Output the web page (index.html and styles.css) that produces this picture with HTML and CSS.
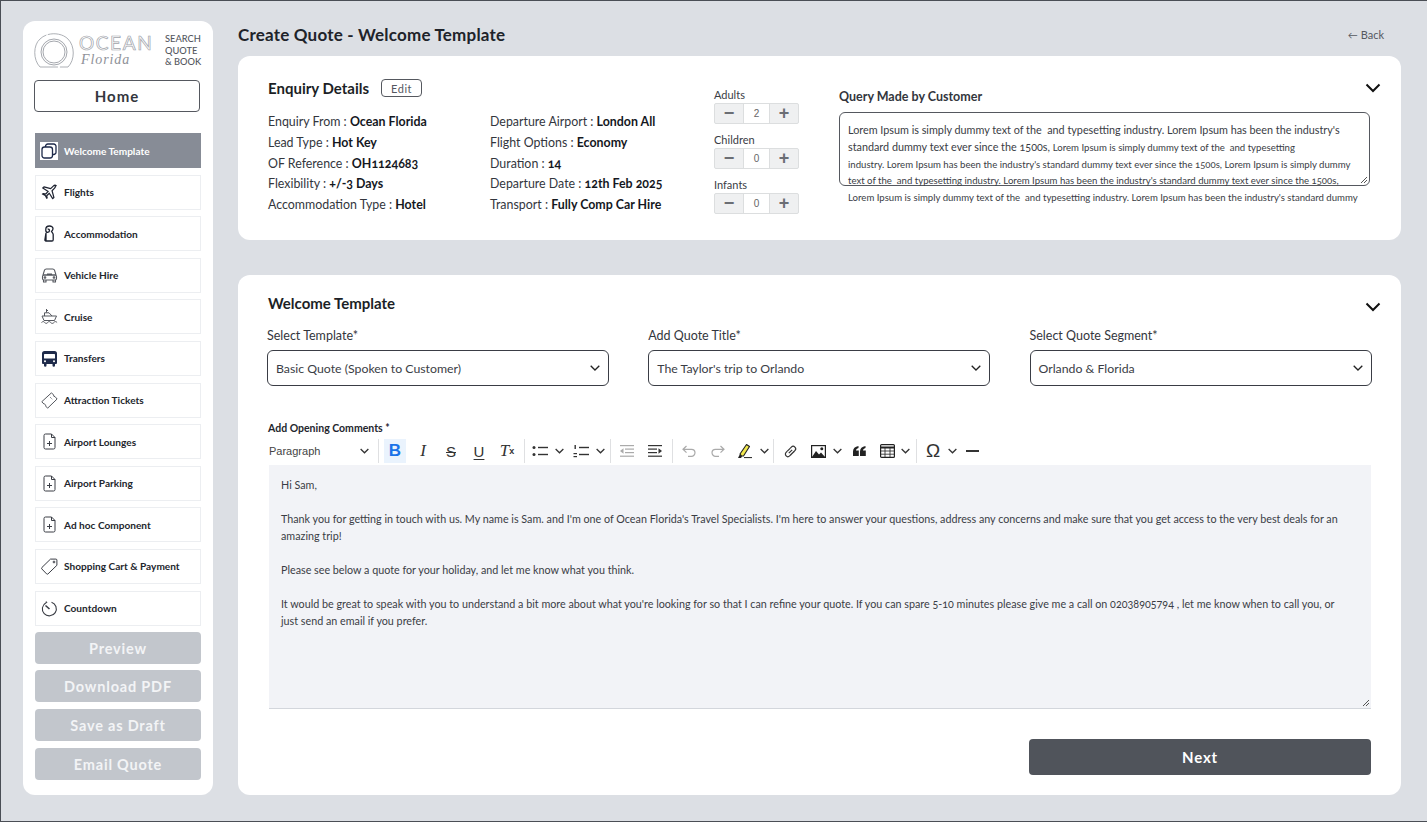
FILE: index.html
```html
<!DOCTYPE html>
<html lang="en">
<head>
<meta charset="utf-8">
<title>Create Quote - Welcome Template</title>
<link rel="stylesheet" href="styles.css">
</head>
<body>
<div class="page">
  <aside class="sidebar">
    <div class="brand">
      <svg class="brand-mark" width="40" height="36" viewBox="0 0 40 36" fill="none" stroke="#a4a7ad">
        <path d="M6 35C-1 28-1 13 6 7 13 0 27 0 34 7 41 14 41 28 34 35Z" stroke-width="0.9" stroke-dasharray="38 1.5 60 2"/>
        <circle cx="20" cy="20" r="13" stroke-width="1"/>
        <circle cx="20" cy="20" r="11" stroke-width="1"/>
      </svg>
      <div class="brand-name">
        <span class="brand-ocean">OCEAN</span>
        <span class="brand-florida">Florida</span>
      </div>
      <div class="brand-tag">SEARCH<br>QUOTE<br>&amp; BOOK</div>
    </div>
    <a class="home-btn">Home</a>
    <nav class="menu">
      <a class="menu-item active">
        <span class="menu-ico"><svg width="16" height="16" viewBox="0 0 16 16" fill="none" stroke="#1e2a4a" stroke-width="1.3"><rect x="1" y="4" width="10.5" height="11" rx="2.5"/><path d="M4.5 4V3.3A2.3 2.3 0 0 1 6.8 1H12.7A2.3 2.3 0 0 1 15 3.3V9.2A2.3 2.3 0 0 1 12.7 11.5H11.5" /></svg></span>
        Welcome Template</a>
      <a class="menu-item">
        <span class="menu-ico"><svg width="17" height="17" viewBox="0 0 24 24" fill="none" stroke="#1d2230" stroke-width="1.7" stroke-linejoin="round"><path d="M21.5 2.5c-1-1-3-.7-4.2.5l-3.6 3.6L4.2 4 2.5 5.7l7.7 4.8-3.6 3.6-3-.6L2 14.1l4 2 .1.1 2 4 .6-.6-.6-3 3.600-3.600 4.800 7.700 1.700-1.700-2.600-9.500 3.600-3.600c1.200-1.200 1.500-3.200.4-3.500z"/></svg></span>
        Flights</a>
      <a class="menu-item">
        <span class="menu-ico"><svg width="17" height="17" viewBox="0 0 17 17" fill="none" stroke="#1d2230" stroke-width="1.3"><path d="M5 16h6a1.200 1.200 0 0 0 1.200-1.200V9.500C12 8 11 7.500 10.500 6.500 11.500 5.500 12 4.800 12 3.700 12 2 10.500 1 8.500 1 6.300 1 4.800 2.300 4.800 4.300V5.500c0 1 .9 1.800 1.900 1.800S8.500 6.500 8.500 5.500 7.600 3.900 6.600 4.200M5 7.800 3.900 14.800A1 1 0 0 0 5 16Z"/></svg></span>
        Accommodation</a>
      <a class="menu-item">
        <span class="menu-ico"><svg width="17" height="17" viewBox="0 0 17 17" fill="none" stroke="#55585f" stroke-width="1.100" stroke-linejoin="round"><path d="M2 8 3.500 3.200C3.800 2.300 4.400 2 5.300 2H11.700C12.600 2 13.200 2.300 13.500 3.200L15 8"/><rect x="1.500" y="8" width="14" height="5" rx="1.500"/><path d="M2.500 13v2h2.500v-2M12 13v2h2.500v-2M6 7h5M2 8h13"/><circle cx="4" cy="10.500" r=".8"/><circle cx="13" cy="10.500" r=".8"/></svg></span>
        Vehicle Hire</a>
      <a class="menu-item">
        <span class="menu-ico"><svg width="17" height="17" viewBox="0 0 17 17" fill="none" stroke="#55585f" stroke-width="1"><path d="M5.500 1v3.500M5.500 2.500h1.500M3.500 8V4.800H8L11 8M1 8h14.500L13.500 12.500H3Z"/><path d="M.5 14.500c1.300-1.200 2.500-1.200 3.200 0 .8 1.200 2 1.200 3 0 1-1.200 2-1.200 3 0 1 1.200 2.300 1.200 3.200 0 .9-1.200 2-1.200 3.200 0"/></svg></span>
        Cruise</a>
      <a class="menu-item">
        <span class="menu-ico"><svg width="17" height="17" viewBox="0 0 17 17" fill="#1e2a4a"><path d="M3.500 1h10A2.500 2.500 0 0 1 16 3.500V13a1 1 0 0 1-1 1H14v1.500a1 1 0 0 1-2.500 0V14h-6v1.500a1 1 0 0 1-2.500 0V14H2a1 1 0 0 1-1-1V3.500A2.500 2.500 0 0 1 3.500 1Z"/><rect x="3" y="4" width="11" height="4.500" rx=".5" fill="#fff"/><circle cx="4" cy="11.300" r="1" fill="#fff"/><circle cx="13" cy="11.300" r="1" fill="#fff"/></svg></span>
        Transfers</a>
      <a class="menu-item">
        <span class="menu-ico"><svg width="17" height="17" viewBox="0 0 17 17" fill="none" stroke="#55585f" stroke-width="1" stroke-linejoin="round"><path d="M.8 9.700 10.500.8 12.600 3a1.500 1.500 0 0 0 1.500 1.700l2 2.300-9.500 9.200-2-2.200A1.600 1.600 0 0 0 2.900 12Z"/><path d="m9 5 .7.700M10.500 6.500l.7.700" /></svg></span>
        Attraction Tickets</a>
      <a class="menu-item">
        <span class="menu-ico"><svg class="doc" width="17" height="17" viewBox="0 0 17 17" fill="none" stroke="#3a3d45" stroke-width="1"><path d="M4.500 1h6l3.500 3.500V14.500a1.500 1.500 0 0 1-1.500 1.500h-8A1.500 1.500 0 0 1 3 14.500v-12A1.500 1.500 0 0 1 4.500 1ZM10.500 1v3.500H14M8.500 8v5M6 10.500h5"/></svg></span>
        Airport Lounges</a>
      <a class="menu-item">
        <span class="menu-ico"><svg class="doc" width="17" height="17" viewBox="0 0 17 17" fill="none" stroke="#3a3d45" stroke-width="1"><path d="M4.500 1h6l3.500 3.500V14.500a1.500 1.500 0 0 1-1.500 1.500h-8A1.500 1.500 0 0 1 3 14.500v-12A1.500 1.500 0 0 1 4.500 1ZM10.500 1v3.500H14M8.500 8v5M6 10.500h5"/></svg></span>
        Airport Parking</a>
      <a class="menu-item">
        <span class="menu-ico"><svg class="doc" width="17" height="17" viewBox="0 0 17 17" fill="none" stroke="#3a3d45" stroke-width="1"><path d="M4.500 1h6l3.500 3.500V14.500a1.500 1.500 0 0 1-1.500 1.500h-8A1.500 1.500 0 0 1 3 14.500v-12A1.500 1.500 0 0 1 4.500 1ZM10.500 1v3.500H14M8.500 8v5M6 10.500h5"/></svg></span>
        Ad hoc Component</a>
      <a class="menu-item">
        <span class="menu-ico"><svg width="17" height="17" viewBox="0 0 17 17" fill="none" stroke="#3a3d45" stroke-width="1" stroke-linejoin="round"><path d="M.9 9.500 9.500 1.100h5.400a1 1 0 0 1 1 1v5.200L7 15.900a1 1 0 0 1-1.400 0L.9 11a1 1 0 0 1 0-1.500Z"/><circle cx="13" cy="4" r=".9"/></svg></span>
        Shopping Cart &amp; Payment</a>
      <a class="menu-item">
        <span class="menu-ico"><svg width="17" height="17" viewBox="0 0 17 17" fill="none" stroke="#3a3d45" stroke-width="1.100"><path d="M10.500 2.200A7 7 0 1 1 5 2.700M5 1.500 6 3"/><path d="M4.500 5.500 8.500 9" stroke-width="1.600"/></svg></span>
        Countdown</a>
    </nav>
    <div class="actions">
      <a class="act-btn">Preview</a>
      <a class="act-btn">Download PDF</a>
      <a class="act-btn">Save as Draft</a>
      <a class="act-btn">Email Quote</a>
    </div>
  </aside>

  <main class="main">
    <header class="topbar">
      <h1 class="page-title">Create Quote - Welcome Template</h1>
      <a class="back"><span class="back-arrow">←</span> Back</a>
    </header>

    <section class="card card-enquiry">
      <svg class="card-chevron" width="16" height="10" viewBox="0 0 16 10" fill="none" stroke="#111" stroke-width="2"><path d="M1.500 1.500 8 8l6.500-6.500"/></svg>
      <div class="enquiry">
        <div class="enquiry-head">
          <h2 class="card-title">Enquiry Details</h2>
          <a class="edit-btn">Edit</a>
        </div>
        <div class="enquiry-grid">
          <div class="fact">Enquiry From : <b>Ocean Florida</b></div>
          <div class="fact">Departure Airport : <b>London All</b></div>
          <div class="fact">Lead Type : <b>Hot Key</b></div>
          <div class="fact">Flight Options : <b>Economy</b></div>
          <div class="fact">OF Reference : <b>OH1124683</b></div>
          <div class="fact">Duration : <b>14</b></div>
          <div class="fact">Flexibility : <b>+/-3 Days</b></div>
          <div class="fact">Departure Date : <b>12th Feb 2025</b></div>
          <div class="fact">Accommodation Type : <b>Hotel</b></div>
          <div class="fact">Transport : <b>Fully Comp Car Hire</b></div>
        </div>
      </div>
      <div class="counters">
        <div class="counter">
          <div class="counter-label">Adults</div>
          <div class="stepper"><span class="step">−</span><span class="step-val">2</span><span class="step">+</span></div>
        </div>
        <div class="counter">
          <div class="counter-label">Children</div>
          <div class="stepper"><span class="step">−</span><span class="step-val">0</span><span class="step">+</span></div>
        </div>
        <div class="counter">
          <div class="counter-label">Infants</div>
          <div class="stepper"><span class="step">−</span><span class="step-val">0</span><span class="step">+</span></div>
        </div>
      </div>
      <div class="query">
        <h3 class="query-title">Query Made by Customer</h3>
        <div class="query-box">
          <div class="q-line q-lg">Lorem Ipsum is simply dummy text of the&nbsp; and typesetting industry. Lorem Ipsum has been the industry's</div>
          <div class="q-line q-lg">standard dummy text ever since the 1500s, <span class="q-sm">Lorem Ipsum is simply dummy text of the&nbsp; and typesetting</span></div>
          <div class="q-line q-sm">industry. Lorem Ipsum has been the industry's standard dummy text ever since the 1500s, Lorem Ipsum is simply dummy</div>
          <div class="q-line q-sm">text of the&nbsp; and typesetting industry. Lorem Ipsum has been the industry's standard dummy text ever since the 1500s,</div>
          <div class="q-line q-sm">Lorem Ipsum is simply dummy text of the&nbsp; and typesetting industry. Lorem Ipsum has been the industry's standard dummy</div>
          <svg class="resize-grip" width="8" height="8" viewBox="0 0 8 8" stroke="#555"><path d="M1 7 7 1M4 7 7 4"/></svg>
        </div>
      </div>
    </section>

    <section class="card card-welcome">
      <svg class="card-chevron" width="16" height="10" viewBox="0 0 16 10" fill="none" stroke="#111" stroke-width="2"><path d="M1.500 1.500 8 8l6.500-6.500"/></svg>
      <h2 class="card-title card-title-inset">Welcome Template</h2>
      <div class="fields">
        <div class="field">
          <label class="field-label">Select Template*</label>
          <div class="select">Basic Quote (Spoken to Customer)<svg width="10" height="6" viewBox="0 0 10 6" fill="none" stroke="#222" stroke-width="1.300"><path d="M.7.700 5 5 9.300.7"/></svg></div>
        </div>
        <div class="field">
          <label class="field-label">Add Quote Title*</label>
          <div class="select">The Taylor's trip to Orlando<svg width="10" height="6" viewBox="0 0 10 6" fill="none" stroke="#222" stroke-width="1.300"><path d="M.7.700 5 5 9.300.7"/></svg></div>
        </div>
        <div class="field">
          <label class="field-label">Select Quote Segment*</label>
          <div class="select">Orlando &amp; Florida<svg width="10" height="6" viewBox="0 0 10 6" fill="none" stroke="#222" stroke-width="1.300"><path d="M.7.700 5 5 9.300.7"/></svg></div>
        </div>
      </div>

      <div class="comments">
        <div class="comments-label">Add Opening Comments *</div>
        <div class="toolbar">
          <div class="tb-para">Paragraph<svg width="9" height="6" viewBox="0 0 10 6" fill="none" stroke="#333" stroke-width="1.400"><path d="M.7.700 5 5 9.300.7"/></svg></div>
          <span class="tb-sep"></span>
          <span class="tb-btn tb-on tb-b">B</span>
          <span class="tb-btn tb-i">I</span>
          <span class="tb-btn tb-s">S</span>
          <span class="tb-btn tb-u">U</span>
          <span class="tb-btn tb-i">T<sub class="tb-x">x</sub></span>
          <span class="tb-sep"></span>
          <span class="tb-btn tb-narrow"><svg width="17" height="12" viewBox="0 0 17 12" fill="#333"><circle cx="2" cy="2.500" r="1.500"/><circle cx="2" cy="9.500" r="1.500"/><rect x="6" y="1.800" width="10" height="1.400"/><rect x="6" y="8.800" width="10" height="1.400"/></svg></span>
          <span class="tb-chev"><svg width="9" height="6" viewBox="0 0 10 6" fill="none" stroke="#333" stroke-width="1.400"><path d="M.7.700 5 5 9.300.7"/></svg></span>
          <span class="tb-btn tb-narrow tb-ol"><svg width="17" height="14" viewBox="0 0 17 14" fill="#333"><rect x="6" y="2.800" width="10" height="1.400"/><rect x="6" y="9.800" width="10" height="1.400"/><rect x="1.500" y="1" width="1.400" height="4"/><rect x=".5" y="9" width="3.500" height="1.200"/><rect x=".5" y="12" width="3.500" height="1.200"/></svg></span>
          <span class="tb-chev"><svg width="9" height="6" viewBox="0 0 10 6" fill="none" stroke="#333" stroke-width="1.400"><path d="M.7.700 5 5 9.300.7"/></svg></span>
          <span class="tb-sep tb-sep-wide"></span>
          <span class="tb-btn"><svg width="16" height="12" viewBox="0 0 16 12" fill="#aaa"><rect x="1" y="0" width="14" height="1.200"/><rect x="6" y="3.500" width="9" height="1.200"/><rect x="6" y="7" width="9" height="1.200"/><rect x="1" y="10.600" width="14" height="1.200"/><path d="M4.500 3.200v5.600L1 6z"/></svg></span>
          <span class="tb-btn"><svg width="16" height="12" viewBox="0 0 16 12" fill="#333"><rect x="1" y="0" width="14" height="1.200"/><rect x="1" y="3.500" width="9" height="1.200"/><rect x="1" y="7" width="9" height="1.200"/><rect x="1" y="10.600" width="14" height="1.200"/><path d="M11.500 3.200v5.600L15 6z"/></svg></span>
          <span class="tb-sep"></span>
          <span class="tb-btn"><svg width="15" height="12" viewBox="0 0 15 12" fill="none" stroke="#aaa" stroke-width="1.200"><path d="M4.500 1 1 4.300l3.500 3.300M1 4.300h8.500a3.500 3.500 0 0 1 0 7H6"/></svg></span>
          <span class="tb-btn"><svg width="15" height="12" viewBox="0 0 15 12" fill="none" stroke="#aaa" stroke-width="1.200"><path d="M10.500 1 14 4.300l-3.500 3.300M14 4.300H5.500a3.500 3.500 0 0 0 0 7H9"/></svg></span>
          <span class="tb-btn"><svg width="16" height="16" viewBox="0 0 16 16"><path d="M3 11 9.500 1.500l3 2L6.500 13H4.500Z" fill="#f2e84d" stroke="#222" stroke-width="1.100" stroke-linejoin="round"/><path d="M3 11 1 15h3l1-1.500Z" fill="#222"/><rect x="7" y="14" width="8" height="1.100" fill="#333"/></svg></span>
          <span class="tb-chev"><svg width="9" height="6" viewBox="0 0 10 6" fill="none" stroke="#333" stroke-width="1.400"><path d="M.7.700 5 5 9.300.7"/></svg></span>
          <span class="tb-sep"></span>
          <span class="tb-btn"><svg width="15" height="15" viewBox="0 0 15 15" fill="none" stroke="#333" stroke-width="1.200"><g transform="rotate(-45 7.500 7.500)"><path d="M5.500 5H3.800a2.500 2.500 0 0 0 0 5h1.700M9.500 5h1.700a2.500 2.500 0 0 1 0 5H9.500"/><path d="M5.500 5h4M5 10h5" /></g><path d="M5.800 9.200 9.200 5.800"/></svg></span>
          <span class="tb-btn"><svg width="15" height="13" viewBox="0 0 15 13"><rect x=".6" y=".6" width="13.800" height="11.800" fill="none" stroke="#222" stroke-width="1.200"/><path d="M1 12 5 6l3 3.500 2-2 4 4.500Z" fill="#222"/><circle cx="10.800" cy="3.800" r="1.500" fill="#222"/></svg></span>
          <span class="tb-chev"><svg width="9" height="6" viewBox="0 0 10 6" fill="none" stroke="#333" stroke-width="1.400"><path d="M.7.700 5 5 9.300.7"/></svg></span>
          <span class="tb-btn tb-quote-gap"><svg width="13" height="10" viewBox="0 0 13 10" fill="#222"><path d="M0 10V5.500C0 2.500 2 .5 5.500 0v2C4 2.500 3 3.400 3 4.500h2.800V10ZM7 10V5.500C7 2.500 9 .5 12.500 0v2C11 2.500 10 3.400 10 4.500h2.800V10Z"/></svg></span>
          <span class="tb-btn"><svg width="15" height="14" viewBox="0 0 15 14" fill="none" stroke="#222"><rect x=".6" y=".6" width="13.800" height="12.800" rx="1" stroke-width="1.200"/><path d="M.6 3.500h13.800" stroke-width="2"/><path d="M.6 7h13.800M.6 10.200h13.800M5 3v10.500M10 3v10.500" stroke-width=".8"/></svg></span>
          <span class="tb-chev tb-chev-tight"><svg width="9" height="6" viewBox="0 0 10 6" fill="none" stroke="#333" stroke-width="1.400"><path d="M.7.700 5 5 9.300.7"/></svg></span>
          <span class="tb-sep tb-sep-mid"></span>
          <span class="tb-btn tb-omega">Ω</span>
          <span class="tb-chev"><svg width="9" height="6" viewBox="0 0 10 6" fill="none" stroke="#333" stroke-width="1.400"><path d="M.7.700 5 5 9.300.7"/></svg></span>
          <span class="tb-btn"><span class="tb-hr"></span></span>
        </div>
        <div class="editor">
          <p class="ed-p">Hi Sam,</p>
          <p class="ed-p">Thank you for getting in touch with us. My name is Sam. and I'm one of Ocean Florida's Travel Specialists. I'm here to answer your questions, address any concerns and make sure that you get access to the very best deals for an amazing trip!</p>
          <p class="ed-p">Please see below a quote for your holiday, and let me know what you think.</p>
          <p class="ed-p">It would be great to speak with you to understand a bit more about what you're looking for so that I can refine your quote. If you can spare 5-10 minutes please give me a call on 02038905794 , let me know when to call you, or just send an email if you prefer.</p>
          <svg class="resize-grip" width="8" height="8" viewBox="0 0 8 8" stroke="#555"><path d="M1 7 7 1M4 7 7 4"/></svg>
        </div>
        <div class="next-row"><a class="next-btn">Next</a></div>
      </div>
    </section>
  </main>
</div>
</body>
</html>
```
FILE: styles.css
```css
* { box-sizing: border-box; }
html, body { margin: 0; height: 100%; }
body {
  font-family: "Lato", "Liberation Sans", sans-serif;
  font-variant-numeric: oldstyle-nums;
  color: #1c1f26;
  background: #dcdfe4;
}
.page {
  height: 822px;
  width: 1427px;
  overflow: hidden;
  display: flex;
  gap: 25px;
  padding: 20px 26px 26px 22px;
  border: solid #4a4e55;
  border-width: 1px 0 1px 1px;
  background: #dcdfe4;
}

/* Sidebar */
.sidebar {
  width: 190px;
  flex: none;
  height: 774px;
  background: #fff;
  border-radius: 12px;
  padding: 9px 12px 0;
}
.brand { display: flex; align-items: center; height: 50px; padding-bottom: 11px; margin-left: -1px; }
.brand-mark { flex: none; margin-top: 1px; }
.brand-name { display: flex; flex-direction: column; margin-left: 5px; width: 86px; flex: none; }
.brand-ocean {
  font-size: 19px; line-height: 19px; letter-spacing: 1.6px; font-weight: 400;
  color: #fff; -webkit-text-stroke: 0.7px #a0a3aa;
}
.brand-florida {
  font-family: "Liberation Serif", serif; font-style: italic;
  font-size: 14px; line-height: 15px; letter-spacing: .9px; color: #8f9299; margin-left: 2px;
}
.brand-tag { font-size: 9.3px; line-height: 11.7px; color: #55585f; font-weight: 500; margin-top: 2px; white-space: nowrap; }
.home-btn {
  display: flex; align-items: center; justify-content: center;
  height: 32px; width: 166px; margin-left: -1px;
  border: 1px solid #55585f; border-radius: 4px;
  font-size: 15px; font-weight: 700; letter-spacing: 1px; color: #33363d;
}
.menu { display: flex; flex-direction: column; gap: 6.6px; margin-top: 21px; }
.menu-item {
  display: flex; align-items: center; gap: 6px;
  height: 35px; padding-left: 4px;
  border: 1px solid #eceef1;
  font-size: 10.1px; font-weight: 700; color: #23262d; white-space: nowrap;
}
.menu-item.active { background: #878c96; border-color: #878c96; color: #fff; }
.menu-ico { width: 18px; height: 18px; display: flex; align-items: center; justify-content: center; flex: none; }
.active .menu-ico { background: #fff; }
.actions { display: flex; flex-direction: column; gap: 6.7px; margin-top: 6px; }
.act-btn {
  display: flex; align-items: center; justify-content: center;
  height: 32px; padding-top: 1px; background: #c2c6cc; border-radius: 4px;
  color: #f3f4f6; font-size: 14.5px; font-weight: 700; letter-spacing: .8px;
}

/* Main */
.main { flex: 1; min-width: 0; display: flex; flex-direction: column; }
.topbar { height: 35px; flex: none; display: flex; justify-content: space-between; align-items: flex-start; }
.page-title { margin: 3px 0 0; font-size: 17px; line-height: 22px; font-weight: 700; color: #20232a; letter-spacing: .2px; }
.back { margin: 6px 17px 0 0; font-size: 11px; line-height: 15px; color: #55585f; }
.back-arrow { font-size: 10px; }
.card { position: relative; background: #fff; border-radius: 12px; }
.card-chevron { position: absolute; right: 20px; }
.card-enquiry { height: 184px; display: flex; padding: 23px 0 0 30px; }
.card-enquiry .card-chevron { top: 27px; }
.card-welcome { height: 520px; margin-top: 35px; padding: 18px 29px 0; }
.card-welcome .card-chevron { top: 27px; }
.card-title { margin: 0; font-size: 15px; line-height: 20px; font-weight: 700; color: #1c1f26; }
.card-title-inset { margin-left: 1px; }

.enquiry { width: 446px; flex: none; }
.enquiry-head { display: flex; align-items: center; height: 18px; gap: 12px; }
.edit-btn {
  width: 41px; height: 18px; display: flex; align-items: center; justify-content: center;
  border: 1px solid #55585f; border-radius: 4px; font-size: 11px; color: #55585f; letter-spacing: .5px;
}
.enquiry-grid { display: grid; grid-template-columns: 222px 224px; grid-auto-rows: 20.8px; margin-top: 15px; }
.fact { font-size: 12.4px; line-height: 20.8px; color: #33363d; white-space: nowrap; }
.fact b { font-weight: 700; color: #15181e; }

.counters { width: 125px; flex: none; display: flex; flex-direction: column; gap: 9px; margin-top: 9px; }
.counter-label { font-size: 11px; line-height: 14px; color: #3a3d45; }
.stepper {
  display: flex; width: 85px; height: 21px; margin-top: 1px;
  border: 1px solid #dcdedf; border-radius: 2px; background: #eff0f1;
}
.step {
  flex: 1; display: flex; align-items: center; justify-content: center;
  font-family: "Liberation Sans", sans-serif; font-size: 18px; font-weight: 700; color: #6b6e74;
}
.step-val {
  width: 27px; display: flex; align-items: center; justify-content: center;
  background: #fff; border: solid #dcdedf; border-width: 0 1px;
  font-family: "Liberation Sans", sans-serif; font-size: 10px; color: #666;
}

.query { width: 531px; flex: none; padding-top: 10px; }
.query-title { margin: 0; font-size: 12.5px; line-height: 15px; font-weight: 700; color: #33363d; }
.query-box {
  position: relative; height: 74px; margin-top: 8px; padding: 9px 8px 0;
  border: 1px solid #55585f; border-radius: 6px;
  color: #3a3d45;
}
.q-line { line-height: 16.8px; white-space: nowrap; }
.q-lg { font-size: 10.8px; }
.q-sm { font-size: 9.6px; }
.resize-grip { position: absolute; right: 1px; bottom: 1px; }

.fields { display: grid; grid-template-columns: repeat(3, 342px); column-gap: 39.25px; margin-top: 15px; }
.field-label { display: block; font-size: 12.5px; line-height: 16px; color: #33363d; }
.select {
  display: flex; align-items: center; justify-content: space-between;
  height: 36px; margin-top: 6px; padding: 0 8px;
  border: 1px solid #3a3d45; border-radius: 6px;
  font-size: 12.3px; color: #3a3d45;
}
.comments { padding: 0 1px 0 2px; margin-top: 35px; }
.comments-label { font-size: 10.5px; line-height: 14px; font-weight: 700; color: #23262d; margin-left: -1px; }
.toolbar { display: flex; align-items: center; height: 24px; margin-top: 4px; }
.tb-para {
  width: 106px; height: 24px; display: flex; align-items: center; justify-content: space-between;
  font-family: "Liberation Sans", sans-serif; font-size: 11px; color: #444; padding-right: 6px;
}
.tb-sep { width: 1px; height: 24px; background: #dfe0e2; margin: 0 2px 0 3px; flex: none; }
.tb-sep-wide { margin-left: 4px; }
.tb-sep-mid { margin: 0 2px 0 5px; }
.tb-btn {
  width: 28px; height: 24px; flex: none; display: flex; align-items: center; justify-content: center;
  font-family: "Liberation Sans", sans-serif; font-size: 15px; color: #333;
}
.tb-narrow { width: 27px; }
.tb-ol { margin-left: 3px; }
.tb-on { background: #eaf3fd; width: 22px; margin: 0 3px; }
.tb-b { font-weight: 700; font-size: 17px; color: #1a73e8; }
.tb-i { font-family: "Liberation Serif", serif; font-style: italic; font-size: 17px; }
.tb-s { text-decoration: line-through; font-size: 15px; }
.tb-u { text-decoration: underline; text-underline-offset: 2px; font-size: 15px; }
.tb-x { font-family: "Liberation Sans", sans-serif; font-style: normal; font-size: 9px; font-weight: 700; }
.tb-chev { width: 12px; flex: none; margin-left: -1px; display: flex; justify-content: center; }
.tb-chev-tight { margin-left: -2px; }
.tb-quote-gap { margin-left: 2px; }
.tb-omega { font-size: 19px; }
.tb-hr { display: block; width: 13px; height: 2px; background: #333; }
.editor {
  position: relative; height: 244px; margin-top: 2px; padding: 11px 26px 0 12px;
  background: #f2f3f7; border-bottom: 1px solid #d3d6dc;
  font-size: 10.75px; line-height: 17px; color: #3a3d45;
}
.ed-p { margin: 0 0 17px; }
.next-row { display: flex; justify-content: flex-end; margin-top: 30px; }
.next-btn {
  width: 342px; height: 36px; display: flex; align-items: center; justify-content: center;
  background: #50545b; border-radius: 4px; color: #fff; font-size: 15px; font-weight: 700; letter-spacing: .8px;
}
```
